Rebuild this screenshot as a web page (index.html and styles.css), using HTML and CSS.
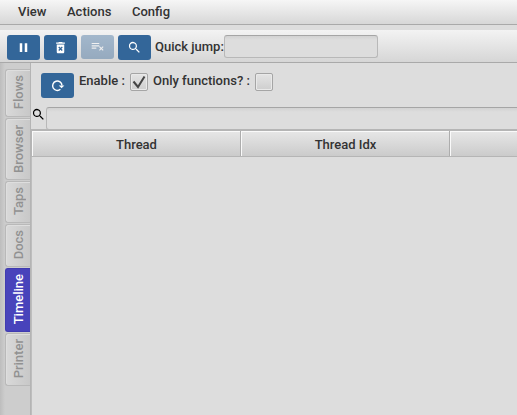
FILE: index.html
```html
<!DOCTYPE html>
<html lang="en">
<head>
<meta charset="utf-8">
<title>Timeline</title>
<link rel="stylesheet" href="styles.css">
</head>
<body>
<nav class="menubar"><span class="view">View</span><span class="actions">Actions</span><span>Config</span></nav>
<header class="toolbar">
  <button class="btn" aria-label="Pause"><svg viewBox="0 0 24 24"><path d="M6 19h4V5H6zm8-14v14h4V5z"/></svg></button>
  <button class="btn" aria-label="Delete"><svg viewBox="0 0 24 24"><path d="M6 19c0 1.100.9 2 2 2h8c1.100 0 2-.9 2-2V7H6zm2.460-7.120 1.410-1.410L12 12.590l2.120-2.120 1.410 1.410L13.410 14l2.120 2.120-1.410 1.410L12 15.410l-2.120 2.120-1.410-1.410L10.590 14zM15.500 4l-1-1h-5l-1 1H5v2h14V4z"/></svg></button>
  <button class="btn disabled" aria-label="Clear" disabled><svg viewBox="0 0 24 24"><path d="M2 5h13v2H2zm0 4h13v2H2zm0 4h8v2H2zm20.400-1-1.400-1.400-2.500 2.500-2.500-2.500-1.400 1.400 2.500 2.500-2.500 2.500 1.400 1.400 2.500-2.500 2.500 2.500 1.400-1.400-2.500-2.500z"/></svg></button>
  <button class="btn" aria-label="Search"><svg viewBox="0 0 24 24"><path d="M15.500 14h-.79l-.28-.27A6.500 6.500 0 1 0 13.730 14.430l.27.28v.79l5 4.990L20.490 19zm-6 0a4.500 4.500 0 1 1 0-9 4.500 4.500 0 0 1 0 9z"/></svg></button>
  <label class="jump" for="jump">Quick jump:</label><input id="jump" class="jump-input">
</header>
<main class="workspace">
  <aside class="tabs">
    <div class="tab flows"><span>Flows</span></div>
    <div class="tab browser"><span>Browser</span></div>
    <div class="tab taps"><span>Taps</span></div>
    <div class="tab docs"><span>Docs</span></div>
    <div class="tab timeline"><span>Timeline</span></div>
    <div class="tab printer"><span>Printer</span></div>
  </aside>
  <section class="panel">
    <div class="controls">
      <button class="btn" aria-label="Refresh"><svg viewBox="0 0 24 24"><path d="M16.600 18.100A7.500 7.500 0 1 1 19.200 12" fill="none" stroke="#fff" stroke-width="2.300"/><path d="M14 12h9l-4.500 4.500z"/></svg></button>
      <span class="enable">Enable :</span>
      <span class="check"><svg viewBox="0 0 18 18"><path d="M3.500 8.500 8 14 14.500 3.500" fill="none" stroke="#444" stroke-width="2"/></svg></span>
      <span class="only">Only functions? :</span>
      <span class="check"></span>
    </div>
    <div class="filter">
      <svg class="search-icon" viewBox="0 0 24 24"><path d="M15.500 14h-.79l-.28-.27A6.500 6.500 0 1 0 13.730 14.430l.27.28v.79l5 4.990L20.490 19zm-6 0a4.500 4.500 0 1 1 0-9 4.500 4.500 0 0 1 0 9z"/></svg>
      <input class="filter-input" aria-label="Filter">
    </div>
    <div class="grid-head"><div>Thread</div><div>Thread Idx</div><div></div></div>
    <div class="grid-body"></div>
  </section>
</main>
</body>
</html>
```
FILE: styles.css
```css
* { box-sizing: border-box; }
body {
  margin: 0;
  width: 517px;
  height: 415px;
  overflow: hidden;
  background: #ddd;
  color: #333;
  font: 500 13px/16px Roboto, "Liberation Sans", sans-serif;
}
.menubar {
  display: flex;
  height: 25px;
  padding: 4px 0 0 18px;
  border-bottom: 1px solid #a9a9a9;
  background: linear-gradient(#f6f6f6, #d7d7d7);
}
.view { width: 49px; }
.actions { width: 65px; }
.toolbar {
  display: flex;
  gap: 4px;
  height: 33px;
  margin-top: 5px;
  padding: 5px 0 0 7px;
  border-bottom: 1px solid #a9a9a9;
  background: linear-gradient(#f3f3f3, #d6d6d6);
}
.btn {
  display: flex;
  flex: none;
  align-items: center;
  justify-content: center;
  width: 33px;
  height: 25px;
  padding: 0;
  border: 0;
  border-radius: 3px;
  background: #336699;
}
.btn svg { width: 15px; height: 15px; fill: #fff; }
.btn.disabled { height: 24px; opacity: .4; }
.btn.disabled svg { height: 14px; }
.jump { width: 69px; padding-top: 4px; white-space: nowrap; }
input {
  margin: 0;
  border: 1px solid #b8b8b8;
  border-top-color: #a5a5a5;
  border-radius: 3px;
  background: linear-gradient(#d2d2d2, #ddd 4px);
}
.jump-input { width: 154px; height: 23px; margin-left: -4px; }
.workspace { display: flex; height: 352px; }
.tabs {
  flex: none;
  width: 31px;
  padding: 6px 0 0 5px;
  border-right: 1px solid #b4b4b4;
  background: linear-gradient(90deg, #bdbdbd, #cdcdcd 5px);
}
.tab {
  display: flex;
  align-items: center;
  justify-content: center;
  width: 25px;
  padding: 0 0 1px 2px;
  border: 1px solid #b9b9b9;
  border-right: 0;
  border-radius: 3px 0 0 3px;
  background: linear-gradient(90deg, #d9d9d9, #c8c8c8);
  color: #919191;
  box-shadow: inset 1px 1px #dedede;
}
.tab span { writing-mode: vertical-rl; transform: rotate(180deg); }
.flows { height: 48px; margin-bottom: 1px; }
.browser { height: 62px; margin-bottom: 1px; }
.taps { height: 42px; margin-bottom: 1px; }
.docs { height: 43px; margin-bottom: 1px; }
.timeline {
  height: 64px;
  margin-bottom: 1px;
  border-color: #403bb0;
  background: #4843bb;
  color: #fff;
  box-shadow: none;
}
.printer { height: 53px; }
.panel {
  display: flex;
  flex: 1;
  flex-direction: column;
  min-width: 0;
  overflow: hidden;
}
.controls { display: flex; flex: none; height: 44px; padding: 10px 0 0 10px; }
.enable { width: 51px; margin-left: 5px; white-space: nowrap; }
.only { width: 102px; margin-left: 5px; white-space: nowrap; }
.check {
  width: 18px;
  height: 18px;
  border: 1px solid #a5a5a5;
  border-radius: 2px;
  background: linear-gradient(#e4e4e4, #cecece);
  box-shadow: inset 0 0 0 1px #e9e9e9;
}
.check svg { display: block; width: 18px; height: 18px; margin: -1px; }
.filter { display: flex; flex: none; height: 22px; }
.search-icon { flex: none; width: 15px; height: 15px; fill: #000; }
.filter-input { flex: none; width: 520px; height: 23px; }
.grid-head {
  display: grid;
  flex: none;
  z-index: 1;
  grid-template-columns: 209px 209px 1fr;
  height: 28px;
  border: solid #b5b5b5;
  border-width: 2px 0 1px 1px;
  text-align: center;
}
.grid-head div {
  padding: 6px 0 0 1px;
  border-right: 1px solid #adadad;
  background: linear-gradient(#e7e7e7, #cbcbcb);
  box-shadow: inset 1px 1px #fafafa;
}
.grid-head div:last-child { border-right: 0; }
.grid-body { flex: 1; border-left: 1px solid #bdbdbd; }
```
